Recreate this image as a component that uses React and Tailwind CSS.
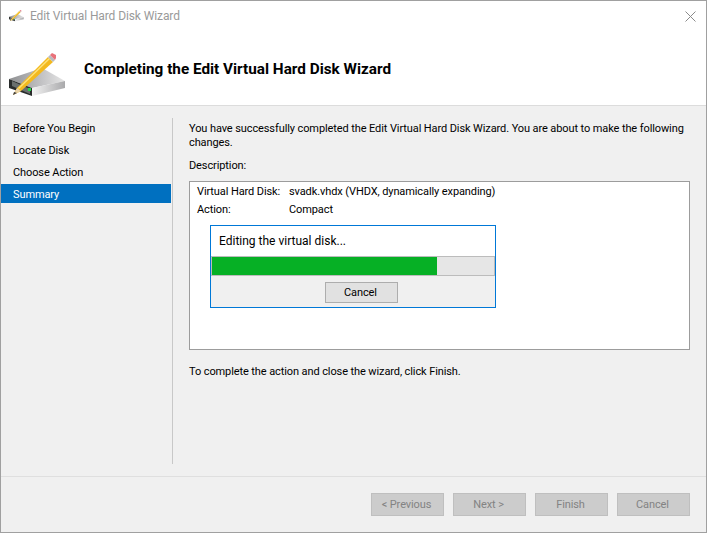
const STEPS = ['Before You Begin', 'Locate Disk', 'Choose Action', 'Summary'];
const FOOTER_BUTTONS = ['< Previous', 'Next >', 'Finish', 'Cancel'];

function DiskIcon({ width = 57, id = 'a' }) {
  return (
    <svg width={width} height={(width * 43) / 57} viewBox="0 0 57 43" className="block shrink-0">
      <defs>
        <linearGradient id={`${id}Top`} x1="0" y1="0" x2="1" y2="0">
          <stop offset="0" stopColor="#8f9092" />
          <stop offset="0.6" stopColor="#c4c4c6" />
          <stop offset="1" stopColor="#e6e6e6" />
        </linearGradient>
        <linearGradient id={`${id}Side`} x1="0" y1="0" x2="1" y2="0">
          <stop offset="0" stopColor="#f4f4f4" />
          <stop offset="1" stopColor="#a9a9ab" />
        </linearGradient>
      </defs>
      <path d="M0 26 L33 15 L56 28 L23 35 Z" fill={`url(#${id}Top)`} />
      <path d="M0 26 L23 35 L23 43 L0 35 Z" fill="#2a2d2c" />
      <path d="M23 35 L56 28 L56 35 L23 43 Z" fill={`url(#${id}Side)`} />
      <path d="M3 28 L21 36 L21 41 L3 33 Z" fill="#6a706e" />
      <rect x="19" y="35" width="3" height="3" fill="#22d84a" />
      <path d="M4 42 L8 35 L39 4 L44 9 L12 38 Z" fill="#f3b91f" />
      <path d="M9 35 L40 5 L41 6 L10 36 Z" fill="#fde27a" />
      <path d="M4 42 L8 35 L12 38 Z" fill="#e9d3a8" />
      <path d="M4 42 L5 39 L8 40 Z" fill="#3c3c3c" />
      <path d="M39 4 L41 2 L46 7 L44 9 Z" fill="#b9bcc0" />
      <path d="M41 2 L43 0 L47 2 L47 5 L46 7 Z" fill="#e8727a" />
    </svg>
  );
}

function WizardButton({ label }) {
  return (
    <div className="w-[73px] h-[23px] flex items-center justify-center pt-px pr-[2px] bg-[#cccccc] border border-[#bfbfbf] text-[#838383]">
      {label}
    </div>
  );
}

export default function App() {
  return (
    <div
      className="w-[707px] h-[533px] flex flex-col bg-[#f0f0f0] border border-[#a0a0a0] text-[11px] leading-[14px] tracking-[-0.1px] text-black overflow-hidden"
      style={{ fontFamily: 'Roboto, "Liberation Sans", sans-serif' }}
    >
      {/* Title bar + header */}
      <div className="h-[105px] shrink-0 bg-white border-b border-[#dcdcdc] flex flex-col">
        <div className="h-[30px] flex items-center pl-[8px] pr-[10px]">
          <DiskIcon width={15} id="small" />
          <span className="ml-[6px] text-[12px] text-[#9a9a9a]">Edit Virtual Hard Disk Wizard</span>
          <svg width="11" height="11" viewBox="0 0 11 11" className="ml-auto" stroke="#8a8a8a" strokeWidth="1">
            <path d="M0.5 0.5 L10.5 10.5 M10.5 0.5 L0.5 10.5" />
          </svg>
        </div>
        <div className="flex items-start pl-[8px] mt-[22px]">
          <DiskIcon width={57} id="large" />
          <h1 className="ml-[18px] mt-[6px] text-[15.3px] font-bold leading-[20px] tracking-normal">Completing the Edit Virtual Hard Disk Wizard</h1>
        </div>
      </div>

      {/* Body */}
      <div className="h-[371px] shrink-0 flex border-b border-[#dfdfdf]">
        <div className="w-[171px] shrink-0 pt-[12px]">
          {STEPS.map((step) => (
            <div
              key={step}
              className={`h-[19px] mb-[3px] pl-[12px] pt-[2px] flex items-center ${step === 'Summary' ? 'bg-[#0070c0] text-white mr-px' : ''}`}
            >
              {step}
            </div>
          ))}
        </div>
        <div className="w-px h-[346px] mt-[12px] bg-[#c8c8c8] shrink-0" />
        <div className="w-[501px] ml-[16px] pt-[16px]">
          <p>You have successfully completed the Edit Virtual Hard Disk Wizard. You are about to make the following changes.</p>
          <p className="mt-[9px]">Description:</p>
          <div className="mt-[8px] h-[169px] bg-white border border-[#9c9c9c] pl-[7px] pt-[1px]">
            <div className="flex h-[18px] items-center">
              <span className="w-[92px]">Virtual Hard Disk:</span>
              <span>svadk.vhdx (VHDX, dynamically expanding)</span>
            </div>
            <div className="flex h-[18px] items-center">
              <span className="w-[92px]">Action:</span>
              <span>Compact</span>
            </div>
            <div className="mt-[6px] ml-[13px] w-[286px] h-[83px] bg-[#f0f0f0] border border-[#0078d7] flex flex-col">
              <div className="h-[30px] bg-white pl-[8px] flex items-center text-[12px] tracking-normal">Editing the virtual disk...</div>
              <div className="h-[20px] bg-[#e6e6e6] border border-[#bcbcbc]">
                <div className="h-full w-[79.8%] bg-[#06b025]" />
              </div>
              <div className="flex mt-[6px] ml-[114px]">
                <div className="w-[73px] h-[21px] flex items-center justify-center pr-[2px] pt-px bg-[#e1e1e1] border border-[#adadad]">Cancel</div>
              </div>
            </div>
          </div>
          <p className="mt-[15px]">To complete the action and close the wizard, click Finish.</p>
        </div>
      </div>

      {/* Footer */}
      <div className="flex-1 flex justify-end gap-[9px] pt-[16px] pr-[16px]">
        {FOOTER_BUTTONS.map((label) => (
          <WizardButton key={label} label={label} />
        ))}
      </div>
    </div>
  );
}
